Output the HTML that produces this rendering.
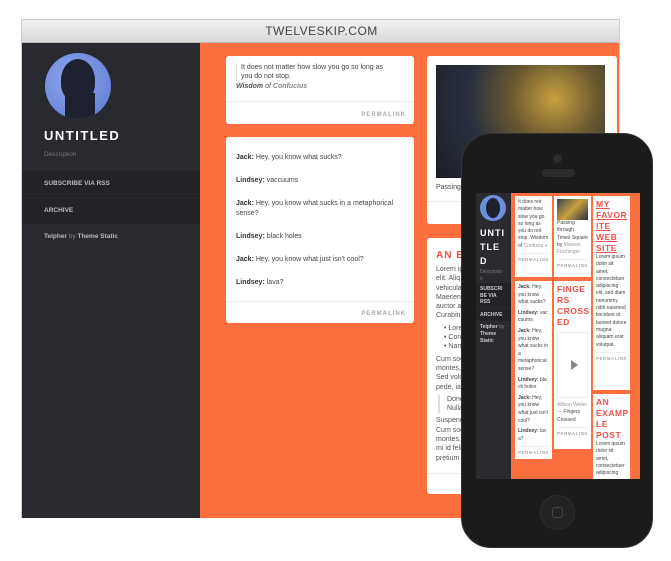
<!DOCTYPE html>
<html><head><meta charset="utf-8"><style>
*{margin:0;padding:0;box-sizing:border-box}
body{width:671px;height:561px;background:#fff;font-family:"Liberation Sans",sans-serif;position:relative;overflow:hidden;color:#444}
.a{position:absolute}
.win{left:21px;top:19px;width:599px;height:499px;border:1px solid #ccc;border-bottom:none;overflow:hidden}
.title{left:0;top:0;width:599px;height:23px;background:linear-gradient(#f2f2f2,#d9d9d9);border-bottom:1px solid #bbb;text-align:center;font-size:12px;line-height:23px;color:#444;letter-spacing:.5px}
.side{left:0;top:23px;width:178px;height:476px;background:#292a2f}
.main{left:178px;top:23px;width:421px;height:476px;background:#fd6f3f}
.card{background:#fff;border-radius:3px;position:absolute}
.perm{position:absolute;right:8px;bottom:6px;font-size:6px;font-weight:bold;color:#aaa;letter-spacing:1px}
.sep{position:absolute;left:0;right:0;border-top:1px solid #eee}
.chat p{font-size:7px;margin-bottom:13px;color:#444;line-height:10px}
.chat b{color:#333}
.ph{left:461px;top:133px;width:192px;height:415px;background:#1b1b1b;border-radius:30px;border:1px solid #333}
.scr{left:476px;top:193px;width:164px;height:286px;background:#fd6f3f;overflow:hidden}
.pc{position:absolute;background:#fff;font-size:5px;line-height:7.3px;color:#444;padding:3px;overflow:hidden}
.pt{color:#f0504a;font-weight:bold;font-size:8.5px;line-height:11px;letter-spacing:.5px}
.pp{font-size:4.5px;color:#aaa;font-weight:bold;letter-spacing:.5px;border-top:1px solid #eee;margin-top:3px;padding-top:2px}
</style></head><body>
<div class="a win">
 <div class="a title">TWELVESKIP.COM</div>
 <div class="a side">
  <div class="a" style="left:23px;top:10px;width:66px;height:66px;border-radius:50%;background:radial-gradient(circle at 40% 40%,#8fa8ee,#5a78d0);overflow:hidden">
   <div class="a" style="left:16px;top:6px;width:34px;height:42px;border-radius:50% 50% 40% 40%;background:#1e2230"></div>
   <div class="a" style="left:20px;top:40px;width:30px;height:30px;background:#1e2230"></div>
  </div>
  <div class="a" style="left:22px;top:85px;color:#fff;font-weight:bold;font-size:13px;letter-spacing:1.5px">UNTITLED</div>
  <div class="a" style="left:22px;top:108px;color:#777;font-size:6.5px">Description</div>
  <div class="a" style="left:0;top:128px;width:178px;height:26px;background:#232327;border-bottom:1px solid #1d1d20;color:#bbb;font-size:6.5px;font-weight:bold;line-height:26px;padding-left:22px">SUBSCRIBE VIA RSS</div>
  <div class="a" style="left:0;top:155px;width:178px;height:26px;background:#232327;color:#bbb;font-size:6.5px;font-weight:bold;line-height:26px;padding-left:22px">ARCHIVE</div>
  <div class="a" style="left:22px;top:190px;color:#888;font-size:6.5px"><b style="color:#bbb">Telpher</b> by <b style="color:#bbb">Theme Static</b></div>
 </div>
 <div class="a main">
  <div class="card" style="left:26px;top:13px;width:188px;height:68px">
   <div class="a" style="left:10px;top:7px;width:160px;border-left:1px solid #ddd;padding-left:4px;font-size:7px;line-height:9px">It does not matter how slow you go so long as you do not stop.</div>
   <div class="a" style="left:10px;top:27px;font-size:7px;font-style:italic;color:#555;font-weight:bold">Wisdom <span style="font-weight:normal">of</span> <span style="color:#888">Confucius</span></div>
   <div class="sep" style="top:45px"></div><div class="perm">PERMALINK</div>
  </div>
  <div class="card chat" style="left:26px;top:94px;width:188px;height:186px;padding:16px 10px">
   <p><b>Jack:</b> Hey, you know what sucks?</p>
   <p><b>Lindsey:</b> vaccuums</p>
   <p><b>Jack:</b> Hey, you know what sucks in a metaphorical sense?</p>
   <p><b>Lindsey:</b> black holes</p>
   <p><b>Jack:</b> Hey, you know what just isn't cool?</p>
   <p><b>Lindsey:</b> lava?</p>
   <div class="sep" style="top:164px"></div><div class="perm">PERMALINK</div>
  </div>
  <div class="card" style="left:227px;top:13px;width:190px;height:168px">
   <div class="a" style="left:9px;top:9px;width:169px;height:113px;background:radial-gradient(circle at 70% 30%,#c9a040,#6b5a30 30%,#2a3040 60%,#1a1d25)"></div>
   <div class="a" style="left:9px;top:128px;font-size:7px">Passing</div>
   <div class="sep" style="top:145px"></div>
  </div>
  <div class="card" style="left:227px;top:195px;width:190px;height:256px">
   <div class="a" style="left:9px;top:12px;color:#f0504a;font-weight:bold;font-size:10px;letter-spacing:1px">AN EX</div>
   <div class="a" style="left:9px;top:27px;font-size:7px;line-height:9.3px;color:#555">Lorem ip<br>elit. Aliq<br>vehicula<br>Maecena<br>auctor at<br>Curabitur<br><div style="margin:3px 0 3px 8px">• Lorem<br>• Conse<br>• Nam a</div>Cum soc<br>montes,<br>Sed volu<br>pede, iac<div style="border-left:2px solid #ddd;margin:3px 0 3px 2px;padding-left:7px">Donec<br>Nulla vi</div>Suspendi<br>Cum soc<br>montes,<br>mi id felis<br>pretium l</div>
   <div class="sep" style="top:235px"></div>
  </div>
 </div>
</div>
<div class="a ph">
 <div class="a" style="left:91px;top:20px;width:9px;height:9px;border-radius:50%;background:#2c2c2c"></div>
 <div class="a" style="left:80px;top:35px;width:33px;height:8px;border-radius:4px;background:#2c2c2c"></div>
 <div class="a" style="left:78px;top:361px;width:35px;height:35px;border-radius:50%;background:#222;border:1px solid #2e2e2e"></div>
 <div class="a" style="left:90px;top:373px;width:11px;height:11px;border-radius:3px;border:1.5px solid #444"></div>
</div>
<div class="a scr">
 <div class="a" style="left:0;top:0;width:35px;height:286px;background:#2a2b30">
  <div class="a" style="left:4px;top:2px;width:26px;height:26px;border-radius:50%;background:#6f8ee0;overflow:hidden"><div class="a" style="left:6px;top:3px;width:14px;height:20px;border-radius:50%;background:#1e2230"></div></div>
  <div class="a" style="left:4px;top:33px;color:#fff;font-weight:bold;font-size:9px;line-height:14px;letter-spacing:1px">UNTI<br>TLE<br>D</div>
  <div class="a" style="left:4px;top:76px;color:#777;font-size:5px;line-height:7px">Descriptio<br>n</div>
  <div class="a" style="left:0;top:90px;width:35px;height:25px;background:#232327;color:#ccc;font-size:5px;font-weight:bold;line-height:6.5px;padding:3px 4px">SUBSCRI<br>BE VIA<br>RSS</div>
  <div class="a" style="left:0;top:116px;width:35px;height:12px;background:#232327;color:#ccc;font-size:5px;font-weight:bold;padding:3px 4px">ARCHIVE</div>
  <div class="a" style="left:4px;top:131px;color:#888;font-size:5px;line-height:7px"><b style="color:#ccc">Telpher</b> by<br><b style="color:#ccc">Theme<br>Static</b></div>
 </div>
 <div class="pc" style="left:39px;top:3px;width:37px;height:81px">It does not matter how slow you go so long as you do not stop. Wisdom of <span style="color:#999">Confuciu s</span><div class="pp">PERMALINK</div></div>
 <div class="pc" style="left:78px;top:3px;width:37px;height:81px"><div style="height:21px;background:linear-gradient(135deg,#3a4050,#c9a040,#2a3040)"></div>Passing through Times Square by <span style="color:#999">Mareen Fischinger</span><div class="pp">PERMALINK</div></div>
 <div class="pc" style="left:39px;top:88px;width:37px;height:178px;line-height:7.6px"><b>Jack:</b> Hey, you know what sucks?<div style="height:3px"></div><b>Lindsey:</b> vac cuums<div style="height:3px"></div><b>Jack:</b> Hey, you know what sucks in a metaphorical sense?<div style="height:3px"></div><b>Lindsey:</b> bla ck holes<div style="height:3px"></div><b>Jack:</b> Hey, you know what just isn't cool?<div style="height:3px"></div><b>Lindsey:</b> lav a?<div class="pp">PERMALINK</div></div>
 <div class="pc" style="left:78px;top:88px;width:37px;height:168px"><div class="pt">FINGE RS CROSS ED</div><div style="height:66px;border:1px solid #eee;margin:4px 0;position:relative"><div class="a" style="left:13px;top:27px;border-left:7px solid #888;border-top:5px solid transparent;border-bottom:5px solid transparent"></div></div><span style="color:#999">Allison Weiss —</span> Fingers Crossed<div class="pp">PERMALINK</div></div>
 <div class="pc" style="left:117px;top:3px;width:37px;height:194px"><div class="pt" style="text-decoration:underline">MY FAVOR ITE WEB SITE</div>Lorem ipsum dolor sit amet, consectetuer adipiscing elit, sed diam nonummy nibh euismod tincidunt ut laoreet dolore magna aliquam erat volutpat.<div class="pp">PERMALINK</div></div>
 <div class="pc" style="left:117px;top:201px;width:37px;height:90px"><div class="pt">AN EXAMP LE POST</div>Lorem ipsum dolor sit amet, consectetuer adipiscing</div>
</div>
</body></html>
